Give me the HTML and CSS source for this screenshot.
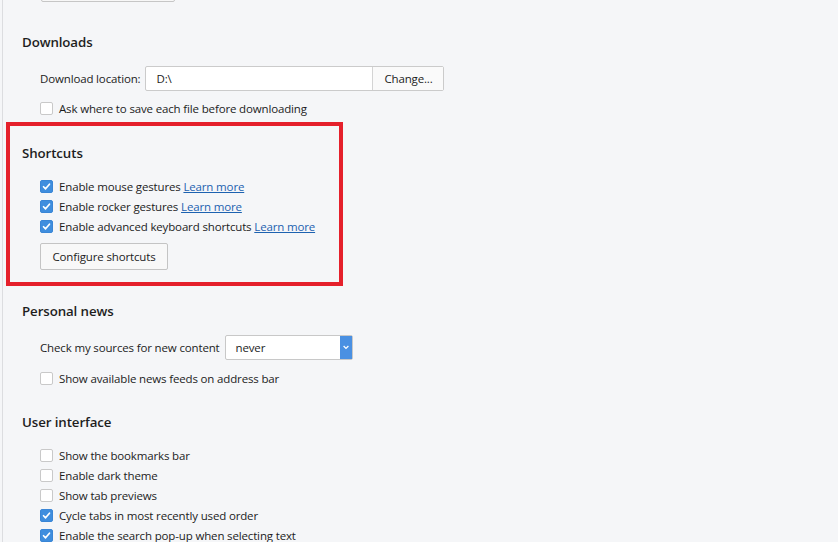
FILE: index.html
```html
<!DOCTYPE html>
<html>
<head>
<meta charset="utf-8">
<link rel="stylesheet" href="styles.css">
</head>
<body>
<div class="page">
  <div class="top-btn"></div>

  <section class="section s-downloads">
    <h2 class="heading">Downloads</h2>
    <div class="field-row">
      <span class="label">Download location:</span>
      <div class="path-box">
        <span class="path-input">D:\</span>
        <span class="path-btn">Change...</span>
      </div>
    </div>
    <label class="check-row"><span class="cb"></span><span class="txt">Ask where to save each file before downloading</span></label>
  </section>

  <section class="section s-shortcuts">
    <h2 class="heading">Shortcuts</h2>
    <div class="rows">
      <label class="check-row"><span class="cb on"><svg viewBox="0 0 13 13"><path d="M3 6.8 L5.4 9.2 L10 3.8" /></svg></span><span class="txt">Enable mouse gestures <a class="link">Learn more</a></span></label>
      <label class="check-row"><span class="cb on"><svg viewBox="0 0 13 13"><path d="M3 6.8 L5.4 9.2 L10 3.8" /></svg></span><span class="txt">Enable rocker gestures <a class="link">Learn more</a></span></label>
      <label class="check-row"><span class="cb on"><svg viewBox="0 0 13 13"><path d="M3 6.8 L5.4 9.2 L10 3.8" /></svg></span><span class="txt">Enable advanced keyboard shortcuts <a class="link">Learn more</a></span></label>
    </div>
    <span class="btn">Configure shortcuts</span>
  </section>

  <section class="section s-news">
    <h2 class="heading">Personal news</h2>
    <div class="field-row">
      <span class="label">Check my sources for new content</span>
      <div class="select">
        <span class="select-val">never</span>
        <span class="select-arrow"><svg viewBox="0 0 12 24"><path d="M3.5 10.5 L6 13 L8.5 10.5" /></svg></span>
      </div>
    </div>
    <label class="check-row"><span class="cb"></span><span class="txt">Show available news feeds on address bar</span></label>
  </section>

  <section class="section s-ui">
    <h2 class="heading">User interface</h2>
    <div class="rows">
      <label class="check-row"><span class="cb"></span><span class="txt">Show the bookmarks bar</span></label>
      <label class="check-row"><span class="cb"></span><span class="txt">Enable dark theme</span></label>
      <label class="check-row"><span class="cb"></span><span class="txt">Show tab previews</span></label>
      <label class="check-row"><span class="cb on"><svg viewBox="0 0 13 13"><path d="M3 6.8 L5.4 9.2 L10 3.8" /></svg></span><span class="txt">Cycle tabs in most recently used order</span></label>
      <label class="check-row"><span class="cb on"><svg viewBox="0 0 13 13"><path d="M3 6.8 L5.4 9.2 L10 3.8" /></svg></span><span class="txt">Enable the search pop-up when selecting text</span></label>
    </div>
  </section>
</div>
</body>
</html>
```

FILE: styles.css
```css
html, body {
  margin: 0;
  padding: 0;
  background: #f5f6f8;
  height: 100%;
  overflow: hidden;
}
body {
  font-family: "Open Sans", "Noto Sans", sans-serif;
  font-size: 11.5px;
  letter-spacing: -0.15px;
  color: #1c1c1c;
}
.page {
  margin-left: 2px;
  border-left: 1px solid #dcdde0;
  min-height: 100%;
  padding-left: 0;
}
.top-btn {
  margin-left: 38px;
  width: 134px;
  height: 26px;
  margin-top: -24px;
  box-sizing: border-box;
  border: 1px solid #c6c6c6;
  border-radius: 2px;
  background: #f7f7f7;
}
.section {
  padding-left: 19px;
}
.heading {
  margin: 0;
  font-size: 13.3px;
  font-weight: 600;
  letter-spacing: -0.1px;
  line-height: 20px;
  height: 20px;
  color: #1e1e1e;
}
.s-downloads { padding-top: 30px; }
.s-downloads .field-row { margin-top: 14px; }
.s-downloads .check-row { margin-top: 7px; }

.field-row {
  display: flex;
  align-items: center;
  margin-left: 18px;
  height: 25px;
}
.label { margin-right: 5px; }
.path-box {
  display: flex;
  height: 25px;
  box-sizing: border-box;
  border: 1px solid #cbcbcb;
  border-radius: 2px;
  background: #fff;
}
.path-input {
  width: 216px;
  padding-left: 10px;
  line-height: 23px;
  border-right: 1px solid #d4d4d4;
}
.path-btn {
  width: 70px;
  text-align: center;
  line-height: 23px;
  background: #fafafa;
}
.check-row {
  display: flex;
  align-items: center;
  height: 20px;
  margin-left: 18px;
}
.cb {
  width: 13px;
  height: 13px;
  box-sizing: border-box;
  border: 1px solid #c9c9c9;
  border-radius: 2px;
  background: #fff;
  margin-right: 6px;
  flex: none;
  display: flex;
}
.cb.on {
  background: #3f8ede;
  border-color: #3a86d6;
}
.cb svg { width: 11px; height: 11px; }
.cb path {
  fill: none;
  stroke: #fff;
  stroke-width: 2;
  stroke-linecap: round;
  stroke-linejoin: round;
}
.link {
  color: #1d62b0;
  text-decoration: underline;
}
.s-shortcuts {
  margin-top: 4px;
  margin-left: 3px;
  width: 317px;
  border: 4px solid #e5202b;
  padding: 17px 0 12px 12px;
}
.s-shortcuts .rows { margin-top: 13px; }
.s-shortcuts .check-row { margin-left: 18px; }
.btn {
  display: inline-block;
  margin-top: 7px;
  margin-left: 18px;
  height: 27px;
  line-height: 25px;
  box-sizing: border-box;
  border: 1px solid #c4c4c4;
  border-radius: 2px;
  background: #f8f8f8;
  padding: 0 11.5px;
}
.s-news { padding-top: 15px; }
.s-news .field-row { margin-top: 14px; }
.s-news .check-row { margin-top: 8px; }
.select {
  display: flex;
  width: 128px;
  height: 25px;
  box-sizing: border-box;
  border: 1px solid #c8c8c8;
  border-radius: 2px;
  background: #fff;
}
.select-val {
  flex: 1;
  padding-left: 10px;
  line-height: 23px;
}
.select-arrow {
  width: 12px;
  background: #4a90e2;
  display: flex;
}
.select-arrow svg { width: 12px; height: 23px; }
.select-arrow path {
  fill: none;
  stroke: #fff;
  stroke-width: 1.3;
}
.s-ui { padding-top: 24px; }
.s-ui .rows { margin-top: 13px; }
```
